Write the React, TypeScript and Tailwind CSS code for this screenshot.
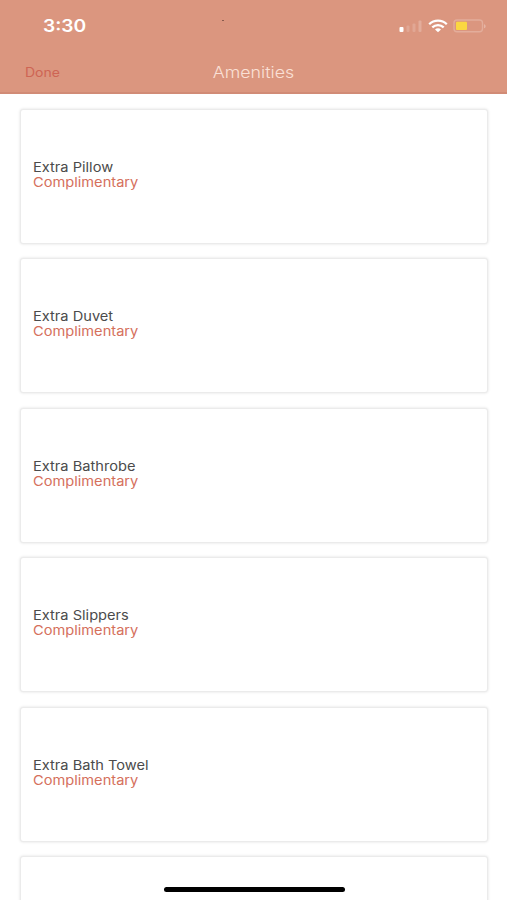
const amenities = [
  { name: 'Extra Pillow', price: 'Complimentary' },
  { name: 'Extra Duvet', price: 'Complimentary' },
  { name: 'Extra Bathrobe', price: 'Complimentary' },
  { name: 'Extra Slippers', price: 'Complimentary' },
  { name: 'Extra Bath Towel', price: 'Complimentary' },
]

function SignalIcon() {
  return (
    <svg className="w-6 h-4" viewBox="0 0 24 16" fill="#fff">
      <rect x="0.5" y="9" width="4" height="5" rx="1" />
      <rect x="7.5" y="7.5" width="3" height="6.5" rx="1" opacity="0.17" />
      <rect x="13.5" y="5.5" width="3" height="8.5" rx="1" opacity="0.17" />
      <rect x="19.5" y="2.5" width="3" height="11.5" rx="1" opacity="0.22" />
    </svg>
  )
}

function WifiIcon() {
  return (
    <svg className="w-5 h-4" viewBox="0 0 20 16" fill="none" stroke="#fff" strokeWidth="2.3">
      <path d="M1.2 6.2C6.1 1.4 13.9 1.4 18.8 6.2" />
      <path d="M4.3 9.3C7.5 6.3 12.5 6.3 15.7 9.3" />
      <path d="M7 11.4C8.7 9.9 11.3 9.9 13 11.4L10 14.2Z" fill="#fff" stroke="none" />
    </svg>
  )
}

function BatteryIcon() {
  return (
    <svg className="w-[34px] h-4" viewBox="0 0 34 16" fill="none">
      <rect x="1" y="2" width="28.5" height="11.8" rx="3" stroke="#fff" strokeOpacity="0.22" strokeWidth="1.4" />
      <rect x="3" y="3.8" width="11" height="8.2" rx="1" fill="#fbd741" />
      <path d="M31 6.2C33.2 7 33.2 9.5 31 10.3Z" fill="#fff" opacity="0.3" />
    </svg>
  )
}

function StatusBar() {
  return (
    <div className="flex items-center h-[52px] pl-[43px] pr-5">
      <span className="inline-block origin-left scale-x-[1.13] text-[17px] leading-5 font-semibold text-white">3:30</span>
      <span className="ml-[141px] mb-3 w-[2px] h-px bg-[#885a4d]" />
      <div className="ml-auto flex items-center">
        <SignalIcon />
        <span className="w-[5px]" />
        <WifiIcon />
        <span className="w-[5px]" />
        <BatteryIcon />
      </div>
    </div>
  )
}

function AmenityCard({ name, price }: { name: string; price: string }) {
  return (
    <div className="h-[135px] shrink-0 flex flex-col justify-center items-start pl-3 pb-[3px] bg-white rounded-[3px] border border-[#ebebeb] shadow-[0_0_3px_rgba(0,0,0,0.13)]">
      <span className="inline-block origin-left scale-x-[1.125] text-[13px] leading-[15px] text-[#4b4b4b]">{name}</span>
      <span className="inline-block origin-left scale-x-[1.125] text-[13px] leading-[15px] text-[#d5705c]">{price}</span>
    </div>
  )
}

export default function App() {
  return (
    <div className="relative w-[507px] h-[900px] overflow-hidden flex flex-col bg-white font-['Inter','Liberation_Sans',sans-serif]">
      <header className="h-[94px] shrink-0 bg-[#db967f] border-b-2 border-[#d18b76]">
        <StatusBar />
        <div className="grid grid-cols-3 items-center h-[41px] px-[25px]">
          <span className="justify-self-start inline-block origin-left scale-x-[1.12] pt-[2px] text-[12.5px] text-[#ce6554]">Done</span>
          <h1 className="justify-self-center inline-block scale-x-[1.15] text-[15.5px] text-[#fae0d6] font-light">Amenities</h1>
        </div>
      </header>

      <main className="flex flex-col gap-[14.5px] pt-[14.5px] pl-5 pr-[19px]">
        {amenities.map((item) => (
          <AmenityCard key={item.name} name={item.name} price={item.price} />
        ))}
        <AmenityCard name="" price="" />
      </main>

      {/* Home indicator */}
      <div className="absolute left-[163.5px] top-[887px] w-[181px] h-[5px] rounded-full bg-black" />
    </div>
  )
}
